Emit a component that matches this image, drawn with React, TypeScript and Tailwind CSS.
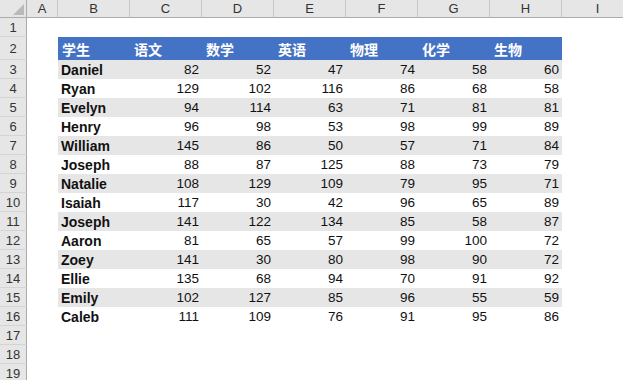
const COLS = ["A", "B", "C", "D", "E", "F", "G", "H", "I"];
const SUBJECTS = ["语文", "数学", "英语", "物理", "化学", "生物"];

const STUDENTS: [string, number[]][] = [
  ["Daniel", [82, 52, 47, 74, 58, 60]],
  ["Ryan", [129, 102, 116, 86, 68, 58]],
  ["Evelyn", [94, 114, 63, 71, 81, 81]],
  ["Henry", [96, 98, 53, 98, 99, 89]],
  ["William", [145, 86, 50, 57, 71, 84]],
  ["Joseph", [88, 87, 125, 88, 73, 79]],
  ["Natalie", [108, 129, 109, 79, 95, 71]],
  ["Isaiah", [117, 30, 42, 96, 65, 89]],
  ["Joseph", [141, 122, 134, 85, 58, 87]],
  ["Aaron", [81, 65, 57, 99, 100, 72]],
  ["Zoey", [141, 30, 80, 98, 90, 72]],
  ["Ellie", [135, 68, 94, 70, 91, 92]],
  ["Emily", [102, 127, 85, 96, 55, 59]],
  ["Caleb", [111, 109, 76, 91, 95, 86]],
];

const grid = "grid grid-cols-[27px_31px_repeat(8,72px)] leading-none";

function RowHead({ n, tall }: { n: number; tall?: boolean }) {
  return (
    <div
      className={`${tall ? "h-[23px]" : "h-[19px]"} flex items-center justify-center bg-[#e6e6e6] border-r border-b border-r-[#ababab] border-b-[#d4d4d4] text-[13px] text-[#333]`}
    >
      {n}
    </div>
  );
}

export default function App() {
  return (
    <div
      className="w-[623px] h-[380px] overflow-hidden bg-white"
      style={{ fontFamily: '"Liberation Sans", "Noto Sans CJK SC", sans-serif' }}
    >
      {/* column headers */}
      <div className={grid}>
        <div className="h-[18px] bg-[#e6e6e6] border-r border-b border-[#ababab] flex items-end justify-end pr-[2px] pb-[2px]">
          <svg width="11" height="11" viewBox="0 0 11 11">
            <polygon points="11,0 11,11 0,11" fill="#b9b9b9" />
          </svg>
        </div>
        {COLS.map((c) => (
          <div
            key={c}
            className="h-[18px] bg-[#e6e6e6] border-r border-b border-r-[#c8c8c8] border-b-[#ababab] flex items-center justify-center text-[13px] text-[#333]"
          >
            {c}
          </div>
        ))}
      </div>

      {/* row 1 */}
      <div className={grid}>
        <RowHead n={1} />
        <div className="col-span-9" />
      </div>

      {/* row 2: table header */}
      <div className={grid}>
        <RowHead n={2} tall />
        <div />
        <div
          className="col-span-7 h-[23px] bg-[#4472c4] grid grid-cols-[repeat(7,72px)] text-white font-bold text-[14px]"
          style={{ fontFamily: '"Noto Sans CJK SC", sans-serif' }}
        >
          <div className="pl-[4px] flex items-center">学生</div>
          {SUBJECTS.map((s) => (
            <div key={s} className="pl-[4px] flex items-center">
              {s}
            </div>
          ))}
        </div>
        <div />
      </div>

      {/* data rows */}
      {STUDENTS.map(([name, scores], i) => (
        <div key={i} className={grid}>
          <RowHead n={i + 3} />
          <div />
          <div
            className={`col-span-7 h-[19px] grid grid-cols-[repeat(7,72px)] text-[#111] ${i % 2 === 0 ? "bg-[#e7e6e6]" : "bg-white"}`}
          >
            <div className="pl-[3px] pt-[1px] flex items-center font-bold text-[14px]">{name}</div>
            {scores.map((s, j) => (
              <div key={j} className="pr-[3px] pt-[1px] flex items-center justify-end text-[13.5px]">
                {s}
              </div>
            ))}
          </div>
          <div />
        </div>
      ))}

      {/* trailing empty rows */}
      {[17, 18, 19].map((n) => (
        <div key={n} className={grid}>
          <RowHead n={n} />
          <div className="col-span-9" />
        </div>
      ))}
    </div>
  );
}
